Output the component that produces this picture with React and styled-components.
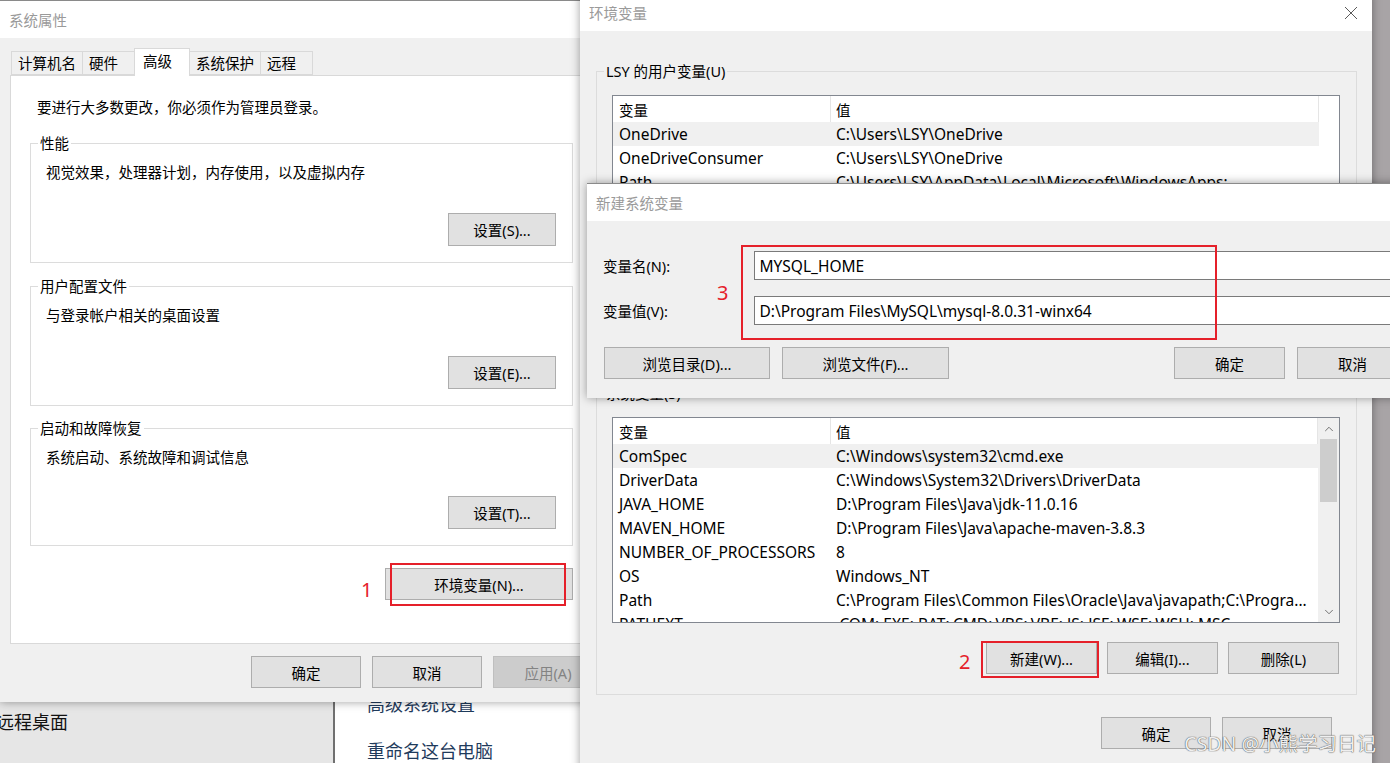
import styled, { createGlobalStyle } from "styled-components";
import { ChevronUp, ChevronDown } from "lucide-react";

const GlobalStyle = createGlobalStyle`
  body {
    margin: 0;
    overflow: hidden;
    font-family: "Noto Sans", "Noto Sans CJK SC", sans-serif;
  }
`;

const ui = `"Noto Sans", "Noto Sans CJK SC", sans-serif`;
const red = "#e5202a";

const userVars = [
  ["OneDrive", "C:\\Users\\LSY\\OneDrive"],
  ["OneDriveConsumer", "C:\\Users\\LSY\\OneDrive"],
  ["Path", "C:\\Users\\LSY\\AppData\\Local\\Microsoft\\WindowsApps;"],
  ["TEMP", "C:\\Users\\LSY\\AppData\\Local\\Temp"],
  ["TMP", "C:\\Users\\LSY\\AppData\\Local\\Temp"],
];

const sysVars = [
  ["ComSpec", "C:\\Windows\\system32\\cmd.exe"],
  ["DriverData", "C:\\Windows\\System32\\Drivers\\DriverData"],
  ["JAVA_HOME", "D:\\Program Files\\Java\\jdk-11.0.16"],
  ["MAVEN_HOME", "D:\\Program Files\\Java\\apache-maven-3.8.3"],
  ["NUMBER_OF_PROCESSORS", "8"],
  ["OS", "Windows_NT"],
  ["Path", "C:\\Program Files\\Common Files\\Oracle\\Java\\javapath;C:\\Progra..."],
  ["PATHEXT", ".COM;.EXE;.BAT;.CMD;.VBS;.VBE;.JS;.JSE;.WSF;.WSH;.MSC"],
];

const App = () => {
  return (
    <Desktop>
      <GlobalStyle />

      <ControlPanel>
        <SidePane>
          <SideItem>远程桌面</SideItem>
        </SidePane>
        <PaneDivider />
        <MainPane>
          <LinkItem>高级系统设置</LinkItem>
          <LinkItem>重命名这台电脑</LinkItem>
        </MainPane>
      </ControlPanel>

      <Window $x={0} $y={0} $w={614} $h={702} $z={1}>
        <TitleBar>系统属性</TitleBar>
        <SysBody>
          <TabStrip>
            <Tab>计算机名</Tab>
            <Tab>硬件</Tab>
            <Tab $active>高级</Tab>
            <Tab>系统保护</Tab>
            <Tab>远程</Tab>
          </TabStrip>
          <TabPage>
            <Intro>要进行大多数更改，你必须作为管理员登录。</Intro>
            <Group $bg="#fff" $h={120} $mt={26}>
              <Legend $bg="#fff">性能</Legend>
              <Desc>视觉效果，处理器计划，内存使用，以及虚拟内存</Desc>
              <GroupActions>
                <Button $w={108} $h={33}>设置(S)...</Button>
              </GroupActions>
            </Group>
            <Group $bg="#fff" $h={120} $mt={23}>
              <Legend $bg="#fff">用户配置文件</Legend>
              <Desc>与登录帐户相关的桌面设置</Desc>
              <GroupActions>
                <Button $w={108} $h={33}>设置(E)...</Button>
              </GroupActions>
            </Group>
            <Group $bg="#fff" $h={118} $mt={22}>
              <Legend $bg="#fff">启动和故障恢复</Legend>
              <Desc>系统启动、系统故障和调试信息</Desc>
              <GroupActions>
                <Button $w={108} $h={33}>设置(T)...</Button>
              </GroupActions>
            </Group>
            <EnvRow>
              <Button $w={188} $h={32}>环境变量(N)...</Button>
            </EnvRow>
          </TabPage>
          <DialogActions>
            <Button $w={110} $h={32}>确定</Button>
            <Button $w={110} $h={32}>取消</Button>
            <Button $w={110} $h={32} $disabled>应用(A)</Button>
          </DialogActions>
        </SysBody>
      </Window>

      <Window $x={580} $y={-7} $w={792} $h={820} $z={2}>
        <TitleBar>
          环境变量
          <CloseBtn>
            <svg width="14" height="14" viewBox="0 0 14 14">
              <path d="M1 1L13 13M13 1L1 13" stroke="#5a5a5a" strokeWidth="1" fill="none" />
            </svg>
          </CloseBtn>
        </TitleBar>
        <EnvBody>
          <Group $bg="#f0f0f0" $h={302} $mt={0}>
            <Legend $bg="#f0f0f0">LSY 的用户变量(U)</Legend>
            <VarList rows={userVars} active={0} />
            <ListActions>
              <Button $w={111} $h={32}>新建(N)...</Button>
              <Button $w={111} $h={32}>编辑(E)...</Button>
              <Button $w={111} $h={32}>删除(D)</Button>
            </ListActions>
          </Group>
          <Group $bg="#f0f0f0" $h={302} $mt={20}>
            <Legend $bg="#f0f0f0">系统变量(S)</Legend>
            <VarList rows={sysVars} active={0} scroll />
            <ListActions>
              <Button $w={111} $h={32}>新建(W)...</Button>
              <Button $w={111} $h={32}>编辑(I)...</Button>
              <Button $w={111} $h={32}>删除(L)</Button>
            </ListActions>
          </Group>
          <EnvActions>
            <Button $w={110} $h={32}>确定</Button>
            <Button $w={110} $h={32}>取消</Button>
          </EnvActions>
        </EnvBody>
      </Window>

      <Window $x={587} $y={183} $w={837} $h={215} $z={3}>
        <TitleBar>新建系统变量</TitleBar>
        <NewBody>
          <FieldRow>
            <FieldLabel>变量名(N):</FieldLabel>
            <Field>MYSQL_HOME</Field>
          </FieldRow>
          <FieldRow>
            <FieldLabel>变量值(V):</FieldLabel>
            <Field>D:\Program Files\MySQL\mysql-8.0.31-winx64</Field>
          </FieldRow>
          <NewActions>
            <Button $w={166} $h={32}>浏览目录(D)...</Button>
            <Button $w={167} $h={32}>浏览文件(F)...</Button>
            <Spacer />
            <Button $w={111} $h={32}>确定</Button>
            <Button $w={111} $h={32}>取消</Button>
          </NewActions>
        </NewBody>
      </Window>

      <Mark $x={390} $y={563} $w={176} $h={43} />
      <StepNum $x={361} $y={577}>1</StepNum>
      <Mark $x={981} $y={641} $w={118} $h={37} />
      <StepNum $x={959} $y={649}>2</StepNum>
      <Mark $x={741} $y={245} $w={476} $h={95} />
      <StepNum $x={717} $y={280}>3</StepNum>

      <Watermark>CSDN @小熊学习日记</Watermark>
    </Desktop>
  );
};

const VarList = ({ rows, active, scroll }) => (
  <ListBox>
    <Table>
      <HeadRow>
        <NameCell $head>变量</NameCell>
        <ValueCell $head>值</ValueCell>
      </HeadRow>
      {rows.map(([name, value], i) => (
        <Row key={name} $active={i === active}>
          <NameCell>{name}</NameCell>
          <ValueCell>{value}</ValueCell>
        </Row>
      ))}
    </Table>
    {scroll && (
      <ScrollBar>
        <ScrollArrow>
          <ChevronUp size={14} strokeWidth={1.5} color="#606060" />
        </ScrollArrow>
        <Thumb />
        <ScrollTrack />
        <ScrollArrow>
          <ChevronDown size={14} strokeWidth={1.5} color="#606060" />
        </ScrollArrow>
      </ScrollBar>
    )}
  </ListBox>
);

export default App;

const Desktop = styled.div`
  position: relative;
  width: 1390px;
  height: 763px;
  overflow: hidden;
  background: #a8a4a6;
  font-family: ${ui};
  color: #000;
`;

const ControlPanel = styled.div`
  position: absolute;
  left: 0;
  top: 0;
  width: 1372px;
  height: 763px;
  display: flex;
  z-index: 0;
`;

const SidePane = styled.div`
  width: 333px;
  background: #e6e6e6;
  display: flex;
  flex-direction: column;
  justify-content: flex-end;
  padding-bottom: 29px;
  box-sizing: border-box;
`;

const SideItem = styled.div`
  font-size: 18px;
  line-height: 24px;
  margin-left: -4px;
  color: #111;
`;

const PaneDivider = styled.div`
  width: 2px;
  background: #707070;
`;

const MainPane = styled.div`
  flex: 1;
  background: #fff;
  display: flex;
  flex-direction: column;
  justify-content: flex-end;
  gap: 23px;
  padding-left: 32px;
`;

const LinkItem = styled.div`
  font-size: 18px;
  line-height: 24px;
  color: #1f3b5c;
`;

const Window = styled.section`
  position: absolute;
  left: ${(p) => p.$x}px;
  top: ${(p) => p.$y}px;
  width: ${(p) => p.$w}px;
  height: ${(p) => p.$h}px;
  z-index: ${(p) => p.$z};
  background: #f0f0f0;
  display: flex;
  flex-direction: column;
  box-shadow: 0 0 9px rgba(0, 0, 0, 0.38);
  border-top: 1px solid #8a8a8a;
  box-sizing: border-box;
`;

const TitleBar = styled.div`
  position: relative;
  height: 37px;
  flex-shrink: 0;
  background: #fff;
  display: flex;
  align-items: center;
  padding-left: 9px;
  font-size: 14.5px;
  color: #9a9a9a;
`;

const CloseBtn = styled.div`
  position: absolute;
  right: 0;
  top: 0;
  width: 42px;
  height: 38px;
  display: flex;
  align-items: center;
  justify-content: center;
`;

const SysBody = styled.div`
  padding: 10px 11px 0 10px;
  display: flex;
  flex-direction: column;
`;

const TabStrip = styled.div`
  display: flex;
  align-items: flex-end;
  height: 27px;
  padding-left: 2px;
  position: relative;
  z-index: 1;
`;

const Tab = styled.div`
  box-sizing: border-box;
  height: ${(p) => (p.$active ? 28 : 24)}px;
  min-width: ${(p) => (p.$active ? 56 : 53)}px;
  padding: ${(p) => (p.$active ? "0 8px 3px" : "0 6px")};
  margin-bottom: ${(p) => (p.$active ? -1 : 0)}px;
  border: 1px solid #d9d9d9;
  border-bottom: ${(p) => (p.$active ? "none" : "1px solid #d9d9d9")};
  margin-left: -1px;
  background: ${(p) => (p.$active ? "#fff" : "#f0f0f0")};
  font-size: 14.5px;
  line-height: 22px;
  display: flex;
  align-items: center;
`;

const TabPage = styled.div`
  background: #fff;
  border: 1px solid #d9d9d9;
  padding: 21px 29px 43px 19px;
  display: flex;
  flex-direction: column;
`;

const Intro = styled.div`
  font-size: 14.5px;
  line-height: 20px;
  margin-left: 7px;
`;

const Group = styled.div`
  position: relative;
  box-sizing: border-box;
  height: ${(p) => p.$h}px;
  margin-top: ${(p) => p.$mt}px;
  border: 1px solid #dcdcdc;
  background: ${(p) => p.$bg};
  display: flex;
  flex-direction: column;
  padding: 18px 16px 16px 15px;
`;

const Legend = styled.span`
  position: absolute;
  top: -11px;
  left: 7px;
  padding: 0 2px;
  background: ${(p) => p.$bg};
  font-size: 14.5px;
  line-height: 20px;
`;

const Desc = styled.div`
  font-size: 14.5px;
  line-height: 20px;
`;

const GroupActions = styled.div`
  margin-top: auto;
  display: flex;
  justify-content: flex-end;
`;

const EnvRow = styled.div`
  margin-top: 22px;
  display: flex;
  justify-content: flex-end;
`;

const Button = styled.div`
  box-sizing: border-box;
  width: ${(p) => p.$w}px;
  height: ${(p) => p.$h}px;
  flex-shrink: 0;
  background: ${(p) => (p.$disabled ? "#cccccc" : "#e1e1e1")};
  border: 1px solid ${(p) => (p.$disabled ? "#bfbfbf" : "#adadad")};
  color: ${(p) => (p.$disabled ? "#838383" : "#000")};
  font-size: 14.5px;
  display: flex;
  align-items: center;
  justify-content: center;
`;

const DialogActions = styled.div`
  margin-top: 12px;
  display: flex;
  justify-content: flex-end;
  gap: 11px;
`;

const EnvBody = styled.div`
  padding: 40px 15px 0 16px;
  display: flex;
  flex-direction: column;
`;

const ListBox = styled.div`
  box-sizing: border-box;
  height: 206px;
  margin-top: 5px;
  border: 1px solid #828790;
  background: #fff;
  display: flex;
  overflow: hidden;
`;

const Table = styled.div`
  width: 706px;
  display: flex;
  flex-direction: column;
`;

const HeadRow = styled.div`
  display: flex;
  height: 26px;
  align-items: stretch;
  flex-shrink: 0;
`;

const Row = styled.div`
  display: flex;
  height: 24px;
  flex-shrink: 0;
  align-items: center;
  background: ${(p) => (p.$active ? "#f0f0f0" : "transparent")};
`;

const NameCell = styled.div`
  box-sizing: border-box;
  width: 218px;
  padding-left: 6px;
  font-size: ${(p) => (p.$head ? 14.5 : 15.5)}px;
  white-space: nowrap;
  display: flex;
  align-items: center;
  border-right: ${(p) => (p.$head ? "1px solid #e5e5e5" : "1px solid transparent")};
`;

const ValueCell = styled.div`
  box-sizing: border-box;
  flex: 1;
  padding-left: 5px;
  font-size: ${(p) => (p.$head ? 14.5 : 15.5)}px;
  white-space: nowrap;
  overflow: hidden;
  display: flex;
  align-items: center;
  border-right: ${(p) => (p.$head ? "1px solid #e5e5e5" : "none")};
`;

const ScrollBar = styled.div`
  width: 21px;
  margin-left: auto;
  background: #f0f0f0;
  display: flex;
  flex-direction: column;
`;

const ScrollArrow = styled.div`
  height: 21px;
  display: flex;
  align-items: center;
  justify-content: center;
`;

const Thumb = styled.div`
  height: 63px;
  margin: 0 2px;
  background: #cdcdcd;
`;

const ScrollTrack = styled.div`
  flex: 1;
`;

const ListActions = styled.div`
  margin-top: 19px;
  display: flex;
  justify-content: flex-end;
  gap: 10px;
  padding-right: 1px;
`;

const EnvActions = styled.div`
  margin-top: 22px;
  display: flex;
  justify-content: flex-end;
  gap: 11px;
  padding-right: 25px;
`;

const NewBody = styled.div`
  padding: 30px 16px 0 16px;
  display: flex;
  flex-direction: column;
  gap: 16px;
`;

const FieldRow = styled.div`
  display: flex;
  align-items: center;
  height: 29px;
`;

const FieldLabel = styled.div`
  width: 153px;
  font-size: 14.5px;
`;

const Field = styled.div`
  box-sizing: border-box;
  width: 660px;
  height: 29px;
  border: 1px solid #7a7a7a;
  background: #fff;
  padding-left: 4px;
  font-size: 15.5px;
  display: flex;
  align-items: center;
  white-space: nowrap;
`;

const NewActions = styled.div`
  margin-top: 6px;
  display: flex;
  gap: 12px;
  padding-left: 1px;
`;

const Spacer = styled.div`
  flex: 1;
`;

const Mark = styled.div`
  position: absolute;
  left: ${(p) => p.$x}px;
  top: ${(p) => p.$y}px;
  width: ${(p) => p.$w}px;
  height: ${(p) => p.$h}px;
  box-sizing: border-box;
  border: 2px solid ${red};
  z-index: 10;
`;

const StepNum = styled.div`
  position: absolute;
  left: ${(p) => p.$x}px;
  top: ${(p) => p.$y}px;
  z-index: 10;
  color: ${red};
  font-family: "Noto Sans", sans-serif;
  font-size: 20px;
  line-height: 26px;
`;

const Watermark = styled.div`
  position: absolute;
  right: 14px;
  bottom: 8px;
  z-index: 10;
  font-size: 19.5px;
  line-height: 22px;
  color: rgba(255, 255, 255, 0.92);
  text-shadow: 0 0 1px #555, 0 0 1px #555;
`;
